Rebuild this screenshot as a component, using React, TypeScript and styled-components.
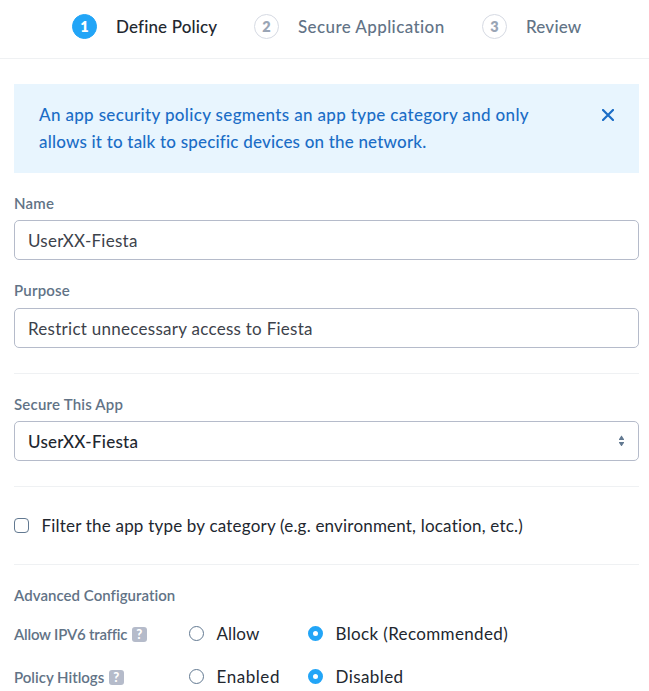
import React from 'react';
import styled, { createGlobalStyle } from 'styled-components';

const GlobalStyle = createGlobalStyle`
  *, *::before, *::after { box-sizing: border-box; }
  body {
    margin: 0;
    background: #fff;
    color: #22272f;
    font-family: Lato, "Open Sans", sans-serif;
    font-size: 17px;
    overflow: hidden;
  }
`;

const Page = styled.main`
  width: 649px;
  height: 691px;
  overflow: hidden;
`;

const Text = styled.span<{ $track?: number }>`
  letter-spacing: ${({ $track = 0 }) => $track}px;
  white-space: nowrap;
`;

const Stepper = styled.header`
  display: flex;
  height: 59px;
  padding: 14px 0 0 72px;
  border-bottom: 1px solid #eff1f3;
`;

const Step = styled.div<{ $active?: boolean; $width: number }>`
  display: flex;
  gap: 19px;
  width: ${({ $width }) => $width}px;
  height: 25px;
  line-height: 26px;
  font-weight: 500;
  color: ${({ $active }) => ($active ? '#22272f' : '#627386')};
`;

const StepNumber = styled.span<{ $active?: boolean }>`
  flex: none;
  display: flex;
  align-items: center;
  justify-content: center;
  width: 25px;
  height: 25px;
  padding-top: 1px;
  border-radius: 50%;
  border: 1px solid ${({ $active }) => ($active ? '#22a5f7' : '#d6dae3')};
  background: ${({ $active }) => ($active ? '#22a5f7' : '#fff')};
  color: ${({ $active }) => ($active ? '#fff' : '#9aa5b5')};
  font-size: 14.5px;
  font-weight: 800;
  line-height: 1;
`;

const Form = styled.form`
  display: flex;
  flex-direction: column;
  padding: 25px 10px 0 14px;
`;

const Banner = styled.div`
  display: flex;
  justify-content: space-between;
  height: 89px;
  padding: 17px 25px 0;
  background: #e8f5fe;
  color: #1b6dc6;
  font-weight: 500;
  line-height: 27px;
`;

const BannerCopy = styled.div`
  display: flex;
  flex-direction: column;
`;

const CloseButton = styled.button`
  width: 12px;
  height: 12px;
  margin-top: 8px;
  padding: 0;
  border: 0;
  background: none;
  color: inherit;
  svg { display: block; }
`;

const Field = styled.div<{ $gap: number }>`
  margin-top: ${({ $gap }) => $gap}px;
`;

const Label = styled.div<{ $height?: number }>`
  height: 20px;
  line-height: ${({ $height = 20 }) => $height}px;
  font-size: 15px;
  font-weight: 600;
  color: #627386;
`;

const Control = styled.div<{ $strong?: boolean; $drop?: number }>`
  display: flex;
  align-items: center;
  justify-content: space-between;
  height: 40px;
  margin-top: 7px;
  padding: ${({ $drop = 0 }) => $drop}px 13px 0;
  border: 1px solid #b5bbca;
  border-radius: 5px;
  color: ${({ $strong }) => ($strong ? '#22272f' : '#3d424b')};
  font-weight: ${({ $strong }) => ($strong ? 500 : 400)};
`;

const Divider = styled.hr<{ $gap: number }>`
  width: 100%;
  height: 1px;
  margin: ${({ $gap }) => $gap}px 0 0;
  border: 0;
  background: #eff1f3;
`;

const CheckRow = styled.label`
  display: flex;
  align-items: center;
  gap: 12.5px;
  height: 23px;
  margin-top: 27px;
`;

const CheckBox = styled.span`
  width: 15px;
  height: 15px;
  margin-bottom: 1px;
  border: 1px solid #627991;
  border-radius: 4px;
`;

const SettingRow = styled.div<{ $gap: number }>`
  display: grid;
  grid-template-columns: 175px 119px 1fr;
  align-items: center;
  height: 22px;
  margin-top: ${({ $gap }) => $gap}px;
`;

const SettingName = styled.div`
  display: flex;
  align-items: center;
  gap: 4.5px;
  color: #627386;
  font-size: 15px;
  font-weight: 600;
`;

const Help = styled.span`
  display: flex;
  align-items: center;
  justify-content: center;
  width: 15px;
  height: 15px;
  margin-top: 1px;
  border-radius: 3px;
  background: #b5bbca;
  color: #fff;
  font-size: 13px;
  font-weight: 900;
  line-height: 15px;
`;

const Option = styled.label`
  display: flex;
  align-items: center;
  gap: 12.5px;
  height: 20px;
  margin-bottom: 2px;
`;

const Radio = styled.span<{ $on?: boolean }>`
  flex: none;
  width: 15px;
  height: 15px;
  border: ${({ $on }) => ($on ? '5px solid #22a5f7' : '1px solid #627991')};
  border-radius: 50%;
  background: #fff;
`;

const steps = [
  { name: 'Define Policy', width: 182, active: true, track: 0.14 },
  { name: 'Secure Application', width: 228, track: 0.4 },
  { name: 'Review', width: 120, track: 0.2 },
];

const settings = [
  {
    name: 'Allow IPV6 traffic', gap: 17, track: -0.22,
    off: { name: 'Allow', track: 0.1 },
    on: { name: 'Block (Recommended)', track: 0.36 },
  },
  {
    name: 'Policy Hitlogs', gap: 21, track: 0,
    off: { name: 'Enabled', track: 0.56 },
    on: { name: 'Disabled', track: 0.41 },
  },
];

const CloseIcon = () => (
  <svg width="12" height="12" viewBox="0 0 12 12" fill="none" stroke="currentColor" strokeWidth="2.2" strokeLinecap="round">
    <path d="M1 1 11 11M11 1 1 11" />
  </svg>
);

const SortIcon = () => (
  <svg width="7" height="12" viewBox="0 0 7 12" fill="#627991">
    <path d="M3.2 0.8h.6L6 4.2v.8H1v-.8ZM1 7h5v.8L3.8 11h-.6L1 7.8Z" />
  </svg>
);

export default function App() {
  return (
    <Page>
      <GlobalStyle />
      <Stepper>
        {steps.map((s, i) => (
          <Step key={s.name} $active={s.active} $width={s.width}>
            <StepNumber $active={s.active}>{i + 1}</StepNumber>
            <Text $track={s.track}>{s.name}</Text>
          </Step>
        ))}
      </Stepper>
      <Form>
        <Banner>
          <BannerCopy>
            <Text $track={0.34}>An app security policy segments an app type category and only</Text>
            <Text $track={0.19}>allows it to talk to specific devices on the network.</Text>
          </BannerCopy>
          <CloseButton type="button" aria-label="Close">
            <CloseIcon />
          </CloseButton>
        </Banner>
        <Field $gap={20}>
          <Label><Text $track={0.2}>Name</Text></Label>
          <Control $drop={1}><Text $track={0.26}>UserXX-Fiesta</Text></Control>
        </Field>
        <Field $gap={21}>
          <Label $height={18}><Text $track={0.2}>Purpose</Text></Label>
          <Control><Text $track={0.27}>Restrict unnecessary access to Fiesta</Text></Control>
        </Field>
        <Divider $gap={25} />
        <Field $gap={20}>
          <Label><Text $track={0.2}>Secure This App</Text></Label>
          <Control $strong>
            <Text $track={0.27}>UserXX-Fiesta</Text>
            <SortIcon />
          </Control>
        </Field>
        <Divider $gap={25} />
        <CheckRow>
          <CheckBox />
          <Text $track={0.2}>Filter the app type by category (e.g. environment, location, etc.)</Text>
        </CheckRow>
        <Divider $gap={27} />
        <Field $gap={21}>
          <Label $height={18}><Text $track={0.04}>Advanced Configuration</Text></Label>
        </Field>
        {settings.map((s) => (
          <SettingRow key={s.name} $gap={s.gap}>
            <SettingName>
              <Text $track={s.track}>{s.name}</Text>
              <Help>?</Help>
            </SettingName>
            <Option><Radio /><Text $track={s.off.track}>{s.off.name}</Text></Option>
            <Option><Radio $on /><Text $track={s.on.track}>{s.on.name}</Text></Option>
          </SettingRow>
        ))}
      </Form>
    </Page>
  );
}
